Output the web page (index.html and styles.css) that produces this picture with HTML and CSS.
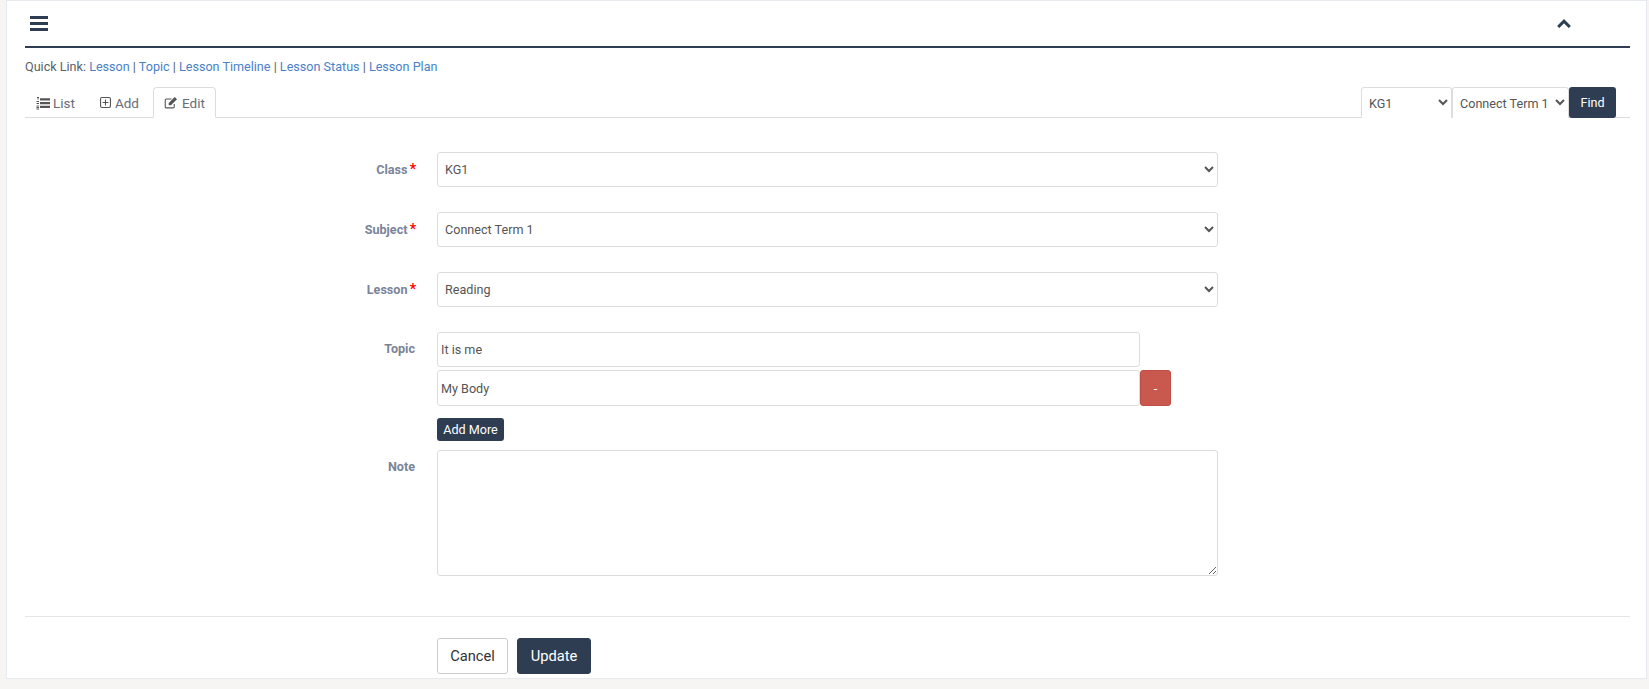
FILE: index.html
```html
<!DOCTYPE html>
<html lang="en">
<head>
<meta charset="utf-8">
<title>Edit Topic</title>
<link rel="stylesheet" href="styles.css">
</head>
<body>
<div class="panel">
  <div class="panel-heading">
    <svg class="icon-bars" viewBox="0 0 18 15" width="18" height="15"><path d="M0 0h18v3H0zM0 6h18v3H0zM0 12h18v3H0z" fill="#2f3d53"/></svg>
    <svg class="icon-up" viewBox="0 0 14 9" width="14" height="9"><path d="M1.2 8 7 2.2 12.8 8" fill="none" stroke="#2a3f54" stroke-width="3"/></svg>
  </div>
  <p class="quick">Quick Link: <a href="#">Lesson</a> | <a href="#">Topic</a> | <a href="#">Lesson Timeline</a> | <a href="#">Lesson Status</a> | <a href="#">Lesson Plan</a></p>
  <div class="tabs">
    <a class="tab tab-list" href="#"><svg viewBox="0 0 14 14" width="14" height="14"><path d="M4 2.200h10v2.200H4zM4 6h10v2.200H4zM4 9.800h10v2.200H4z" fill="#555"/><path d="M1 1h2v1H1zM1.500 2h1v1.500h-1zM0.500 5h2.500v1H0.500zM0.500 7h2.500v1H0.500zM0.500 9.500h2.500v1H0.500zM0.500 11h2.500v1H0.500zM0.500 12.500h2.500v1H0.500z" fill="#555"/></svg>List</a>
    <a class="tab tab-add" href="#"><svg viewBox="0 0 12 12" width="11" height="11"><rect x="0.6" y="0.6" width="10.800" height="10.800" rx="1.500" fill="none" stroke="#555" stroke-width="1.200"/><path d="M6 2.800v6.400M2.800 6h6.400" stroke="#555" stroke-width="1.200"/></svg>Add</a>
    <a class="tab active" href="#"><svg viewBox="0 0 15 14" width="14" height="13"><path d="M11 8.500V11.500a1.300 1.300 0 0 1-1.300 1.300H2.600a1.300 1.300 0 0 1-1.300-1.300V4.500a1.300 1.300 0 0 1 1.300-1.300H8" fill="none" stroke="#555" stroke-width="1.200"/><path d="M5 7.500 11.500 1 14 3.500 7.500 10H5z" fill="#555"/></svg>Edit</a>
    <form class="finder">
      <select class="find-select find-class"><option>KG1</option></select>
      <select class="find-select find-subject"><option>Connect Term 1</option></select>
      <button class="btn-find" type="button">Find</button>
    </form>
  </div>
  <form class="form">
    <div class="row">
      <label class="label">Class <span class="req">*</span></label>
      <select class="control"><option>KG1</option></select>
    </div>
    <div class="row">
      <label class="label">Subject <span class="req">*</span></label>
      <select class="control"><option>Connect Term 1</option></select>
    </div>
    <div class="row">
      <label class="label">Lesson <span class="req">*</span></label>
      <select class="control"><option>Reading</option></select>
    </div>
    <div class="row row-topic">
      <label class="label">Topic</label>
      <div class="topics">
        <input class="topic-input first" type="text" value="It is me">
        <div class="topic-line">
          <input class="topic-input second" type="text" value="My Body">
          <button class="btn-remove" type="button">-</button>
        </div>
        <button class="btn-more" type="button">Add More</button>
      </div>
    </div>
    <div class="row row-note">
      <label class="label">Note</label>
      <textarea class="note"></textarea>
    </div>
    <div class="divider"></div>
    <div class="actions">
      <button class="btn btn-cancel" type="button">Cancel</button>
      <button class="btn btn-update" type="button">Update</button>
    </div>
  </form>
</div>
</body>
</html>
```
FILE: styles.css
```css
* { box-sizing: border-box; }
html, body { height: 100%; }
body {
  margin: 0;
  background: #f7f4f4;
  font-family: Roboto, "Liberation Sans", sans-serif;
  font-size: 12.6px;
  color: #555;
  overflow: hidden;
}
.panel {
  margin-left: 6px;
  margin-right: 2px;
  height: 679px;
  background: #fff;
  border: 1px solid #e6e9ed;
  padding: 0 16px 0 18px;
}
.panel-heading {
  height: 47px;
  border-bottom: 2px solid #2f3d53;
  display: flex;
  align-items: flex-start;
  justify-content: space-between;
  padding: 15px 59px 0 5px;
}
.icon-up { margin-top: 3px; }
.quick { margin: 12px 0 0; height: 14px; line-height: 14px; color: #5a5f68; }
.quick a { color: #4a7fc7; text-decoration: none; }
.tabs {
  margin-top: 13px;
  height: 31px;
  border-bottom: 1px solid #ddd;
  display: flex;
  align-items: flex-start;
}
.tab {
  height: 31px;
  padding: 0 12px 0 11px;
  display: flex;
  align-items: center;
  gap: 4px;
  color: #666d78;
  font-size: 13.5px;
  text-decoration: none;
  border: 1px solid transparent;
}
.tab-list { padding-left: 10px; gap: 3px; }
.tab-add { padding-right: 13px; }
.tab.active {
  padding: 0 10px;
  background: #fff;
  border-color: #ddd;
  border-bottom-color: #fff;
  border-radius: 4px 4px 0 0;
}
.finder { margin-left: auto; margin-right: 14px; display: flex; height: 31px; }
.find-select {
  height: 31px;
  font: 12.6px Roboto, sans-serif;
  color: #555;
  background: #fff;
  border: 1px solid #ddd;
  border-bottom: 0;
  border-radius: 3px 3px 0 0;
  padding: 0 3px;
}
.find-class { width: 91px; }
.find-subject { width: 117px; }
.btn-find {
  width: 47px;
  height: 31px;
  background: #2f3d53;
  color: #fff;
  border: 0;
  border-radius: 3px;
  font: 12.6px Roboto, sans-serif;
}
.form { display: block; margin-top: 34px; }
.row {
  display: flex;
  align-items: flex-start;
  margin-bottom: 25px;
  height: 35px;
}
.label {
  width: 412px;
  text-align: right;
  padding-top: 10px;
  padding-right: 21px;
  font-weight: 700;
  line-height: 14px;
  color: #7a8499;
  flex: none;
}
.row-topic .label, .row-note .label { padding-right: 22px; }
.req { color: #f00; font-size: 14px; margin-left: -1px; line-height: 1; }
.control {
  width: 781px;
  height: 35px;
  font: 12.6px Roboto, sans-serif;
  color: #555;
  background: #fff;
  border: 1px solid #ddd;
  border-radius: 3px;
  padding: 0 3px;
}
.row-topic { height: auto; margin-bottom: 9px; }
.topics { display: flex; flex-direction: column; align-items: flex-start; }
.topic-input {
  width: 703px;
  height: 35px;
  font: 12.6px Roboto, sans-serif;
  color: #555;
  border: 1px solid #ddd;
  border-radius: 3px;
  padding: 0 3px;
  background: #fff;
}
.topic-input.first { margin-bottom: 3px; }
.topic-input.second { height: 36px; }
.topic-line { display: flex; }
.btn-remove {
  width: 31px;
  height: 36px;
  background: #c9584f;
  border: 1px solid #bd4d45;
  border-radius: 3px;
  color: #fff;
  font: 12.6px Roboto, sans-serif;
}
.btn-more {
  margin-top: 12px;
  height: 23px;
  width: 67px;
  padding: 0;
  background: #2f3d53;
  color: #fff;
  border: 0;
  border-radius: 3px;
  font: 12.6px Roboto, sans-serif;
}
.row-note { height: 126px; margin-bottom: 0; }
.note {
  width: 781px;
  height: 126px;
  border: 1px solid #ddd;
  border-radius: 3px;
  background: #fff;
  font: 12.6px Roboto, sans-serif;
}
.divider { margin-top: 40px; border-top: 1px solid #e5e5e5; }
.actions { display: flex; gap: 9px; padding-left: 412px; margin-top: 21px; }
.btn {
  height: 36px;
  border-radius: 3px;
  font: 14.7px Roboto, sans-serif;
  padding: 0;
}
.btn-cancel { width: 71px; background: #fff; color: #333; border: 1px solid #ccc; }
.btn-update { width: 74px; background: #2f3d53; color: #fff; border: 1px solid #2f3d53; }
```
